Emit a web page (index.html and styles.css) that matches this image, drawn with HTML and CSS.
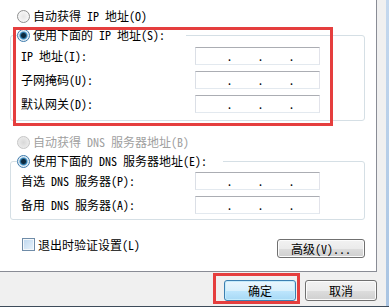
FILE: index.html
```html
<!DOCTYPE html>
<html lang="zh-CN">
<head>
    <meta charset="UTF-8">
    <title>Internet 协议版本 4 (TCP/IPv4) 属性</title>
    <link rel="stylesheet" href="styles.css">
</head>
<body>
    <div class="window">
        <div class="dialog">
            <!-- General tab page -->
            <div class="page">
                <div class="option"><span class="radio"></span><span>自动获得 IP 地址(O)</span></div>

                <fieldset class="group">
                    <legend class="option legend-ip"><span class="radio checked"></span><span>使用下面的 IP 地址(S):</span></legend>
                    <div class="fields">
                        <label>IP 地址(I):</label>
                        <div class="ip-box"><span></span><span class="dot">.</span><span></span><span class="dot">.</span><span></span><span class="dot">.</span><span></span></div>
                        <label>子网掩码(U):</label>
                        <div class="ip-box"><span></span><span class="dot">.</span><span></span><span class="dot">.</span><span></span><span class="dot">.</span><span></span></div>
                        <label>默认网关(D):</label>
                        <div class="ip-box"><span></span><span class="dot">.</span><span></span><span class="dot">.</span><span></span><span class="dot">.</span><span></span></div>
                    </div>
                </fieldset>

                <div class="option disabled option-dns"><span class="radio"></span><span>自动获得 DNS 服务器地址(B)</span></div>

                <fieldset class="group group-dns">
                    <legend class="option legend-dns"><span class="radio checked"></span><span>使用下面的 DNS 服务器地址(E):</span></legend>
                    <div class="fields fields-dns">
                        <label>首选 DNS 服务器(P):</label>
                        <div class="ip-box"><span></span><span class="dot">.</span><span></span><span class="dot">.</span><span></span><span class="dot">.</span><span></span></div>
                        <label>备用 DNS 服务器(A):</label>
                        <div class="ip-box"><span></span><span class="dot">.</span><span></span><span class="dot">.</span><span></span><span class="dot">.</span><span></span></div>
                    </div>
                </fieldset>

                <div class="page-bottom">
                    <div class="check"><span class="checkbox"></span><span>退出时验证设置(L)</span></div>
                    <button class="btn btn-adv">高级(V)...</button>
                </div>
            </div>

            <!-- Dialog buttons -->
            <div class="footer">
                <button class="btn btn-default">确定</button>
                <button class="btn">取消</button>
            </div>

            <!-- Red annotation boxes -->
            <div class="highlight highlight-ip"></div>
            <div class="highlight highlight-ok"></div>
        </div>
        <div class="frame"></div>
    </div>
</body>
</html>
```

FILE: styles.css
```css
/* Basic Reset */
body {
    margin: 0;
    font-family: "Noto Sans Mono CJK SC", "Noto Sans CJK SC", sans-serif;
    font-size: 12px;
    color: #000;
    background-color: #f0f0f0;
}

/* Window */
.window {
    display: flex;
    width: 389px;
    height: 306px;
    border-bottom: 1px solid #3d4b5a;
}

.dialog {
    position: relative;
    width: 386px;
    display: flex;
    flex-direction: column;
}

.frame {
    width: 3px;
    background: linear-gradient(#c4d8ee, #a9c4e2);
}

/* Tab page */
.page {
    box-sizing: border-box;
    width: 377px;
    height: 272px;
    padding: 9px 11px 0 10px;
    background-color: #fff;
    border-right: 1px solid #898c95;
    border-bottom: 1px solid #898c95;
}

.option {
    display: flex;
    align-items: center;
    gap: 3px;
    height: 14px;
    line-height: 14px;
    padding-left: 7px;
    white-space: nowrap;
}

.option.disabled {
    color: #a0a0a0;
}

.option-dns {
    margin-top: 14px;
}

/* Radio buttons */
.radio {
    box-sizing: border-box;
    width: 13px;
    height: 13px;
    border-radius: 50%;
    border: 1px solid #8e8f8f;
    background: radial-gradient(circle at 50% 50%, #e6e6e6 0, #f8f8f8 6px);
}

.radio.checked {
    border-color: #3d7bad;
    background: radial-gradient(circle at 50% 50%, #0d2a3e 0, #0d2a3e 2px, #3f92c8 3.5px, #d9e8f2 4.5px, #f6f6f6 6px);
}

.disabled .radio {
    border-color: #c6c6c6;
    background: radial-gradient(circle at 50% 50%, #d8d8d8 0, #ececec 6px);
}

/* Group boxes */
.group {
    box-sizing: border-box;
    width: 355px;
    margin: 5px 0 0;
    padding: 0 6px;
    border: 1px solid #d5dfe5;
    border-radius: 3px;
}

.group legend {
    padding: 0;
}

.legend-ip {
    width: 169px;
}

.legend-dns {
    width: 206px;
}

.fields {
    display: grid;
    grid-template-columns: 174px 125px;
    row-gap: 6px;
    align-items: center;
    padding: 5px 0 7px 4px;
}

.fields-dns {
    padding: 4px 0 5px 4px;
}

.fields label {
    line-height: 14px;
    white-space: nowrap;
}

.ip-box {
    box-sizing: border-box;
    height: 18px;
    display: grid;
    grid-template-columns: 30px 7px 24px 7px 24px 7px 1fr;
    line-height: 16px;
    border: 1px solid;
    border-color: #abadb3 #e2e3ea #e3e9ef #dbdfe6;
    background-color: #fff;
}

.dot {
    text-align: center;
}

/* Checkbox and advanced button */
.page-bottom {
    display: flex;
    justify-content: space-between;
    align-items: flex-start;
    margin-top: 18px;
}

.check {
    display: flex;
    align-items: center;
    gap: 3px;
    height: 13px;
    padding-left: 12px;
    line-height: 13px;
}

.checkbox {
    box-sizing: border-box;
    width: 13px;
    height: 13px;
    border: 1px solid #6f8ca8;
    background: linear-gradient(135deg, #bcd6ee, #eaf4fc);
    box-shadow: inset 0 0 0 1px #f4f8fb;
}

.btn {
    box-sizing: border-box;
    height: 21px;
    padding: 0;
    font-family: inherit;
    font-size: 12px;
    color: #000;
    border: 1px solid #707070;
    border-radius: 3px;
    background: linear-gradient(#f2f2f2 0%, #ebebeb 50%, #dddddd 51%, #cfcfcf 100%);
    box-shadow: inset 0 0 0 1px #fcfcfc;
}

.btn-adv {
    width: 88px;
    height: 19px;
    margin-top: 1px;
}

/* Footer */
.footer {
    display: flex;
    justify-content: flex-end;
    gap: 9px;
    padding: 8px 9px 0 0;
}

.footer .btn {
    width: 72px;
}

.btn-default {
    border-color: #3c7fb1;
    background: linear-gradient(#eaf6fd 0%, #d9f0fc 50%, #bee6fd 51%, #a7d9f5 100%);
    box-shadow: inset 0 0 0 1px #c5ebfb;
}

/* Annotation boxes */
.highlight {
    position: absolute;
    box-sizing: border-box;
    border: 3px solid #e53e3e;
}

.highlight-ip {
    left: 13px;
    top: 27px;
    width: 320px;
    height: 99px;
}

.highlight-ok {
    left: 213px;
    top: 273px;
    width: 87px;
    height: 31px;
}
```
